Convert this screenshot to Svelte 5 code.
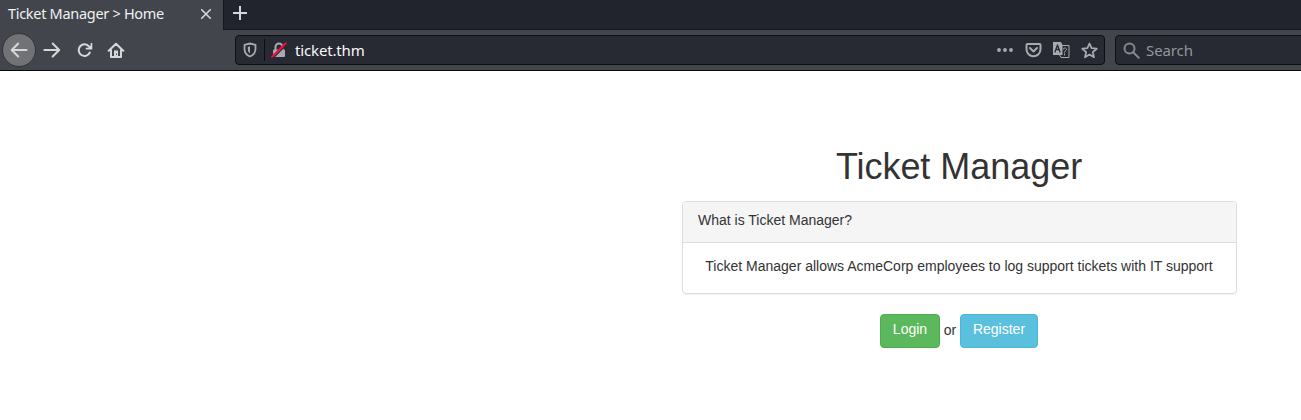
<script>
  const title = 'Ticket Manager';
</script>

<div class="window">
  <header class="tabs">
    <div class="tab">
      <span class="tab-title">Ticket Manager &gt; Home</span>
      <svg class="close" width="12" height="12" viewBox="0 0 12 12"><path d="M1.700 1.700l8.600 8.600M10.300 1.700l-8.600 8.600" /></svg>
    </div>
    <div class="strip">
      <svg width="16" height="16" viewBox="0 0 16 16"><path d="M8 1v14M1 8h14" /></svg>
    </div>
  </header>

  <nav class="toolbar">
    <button class="back" aria-label="Back">
      <svg width="18" height="16" viewBox="0 0 18 16"><path d="M16.500 8H2M8.200 1.500L1.700 8l6.500 6.500" /></svg>
    </button>
    <svg class="forward" width="18" height="16" viewBox="0 0 18 16"><path d="M1.300 8H16M9.700 1.500L16.200 8l-6.500 6.500" /></svg>
    <svg class="reload" width="16" height="16" viewBox="0 0 16 16">
      <path d="M12.800 10.500A5.800 5.800 0 1 1 12 4.500" />
      <path class="solid" d="M15.300 1v6.500H8.800V5.800h2.500L13.600 3.500V1z" />
    </svg>
    <svg class="home" width="18" height="17" viewBox="0 0 18 17">
      <path d="M1.700 8.700L9 1.700l7.300 7M4 8v7h10V8" />
      <path class="solid" fill-rule="evenodd" d="M7 8.500h4V16H7zM9 11.500v1.500h1v-1.500z" />
    </svg>

    <div class="address">
      <svg class="shield" width="14" height="16" viewBox="0 0 14 16">
        <path d="M7 1.500L12.500 2.800V7c0 3.700-2.200 6.200-5.500 7.500C3.700 13.200 1.500 10.700 1.500 7V2.800z" />
        <path class="solid" d="M7 4.300L4.800 4.900V7c0 2.100.8 3.500 2.200 4.500z" />
      </svg>
      <span class="divider"></span>
      <svg class="lock" width="16" height="16" viewBox="0 0 16 16">
        <path d="M4.500 8V5a3.500 3.500 0 0 1 7 0v3" />
        <rect x="2" y="7.500" width="12" height="7.500" rx="1" />
        <path class="gap" d="M2.200 16L15.800 2.400" />
        <path class="slash" d="M1.200 14.800L14.800 1.200" />
      </svg>
      <span class="url">ticket.thm</span>
      <svg class="dots" width="16" height="16" viewBox="0 0 16 16"><circle cx="2" cy="8" r="1.900" /><circle cx="8" cy="8" r="1.900" /><circle cx="14" cy="8" r="1.900" /></svg>
      <svg class="pocket" width="17" height="16" viewBox="0 0 17 16">
        <path d="M2.500 2h12q1 0 1 1v4.300a7 7 0 0 1-14 0V3q0-1 1-1z" /><path d="M5 6l3.500 3.500L12 6" />
      </svg>
      <svg class="translate" width="17" height="16" viewBox="0 0 17 16">
        <path class="solid" d="M0 0h8l1.500 3V13H0z" />
        <path class="letter" d="M2 10l2.500-7L7 10M3 7.500h3.200" />
        <path class="frame" d="M9 3.500h7v12H8L6.500 13" />
        <path class="frame" d="M10.200 7q1-1.500 2.400-.8c1.700.9.700 2-.1 2.600-1 .8-1 1-1 1.600M11.500 12v1" />
      </svg>
      <svg class="star" width="17" height="17" viewBox="0 0 17 17"><path d="M8.500 1.500l2.100 4.700 5.100.5-3.900 3.400 1.200 5.100-4.500-2.700L4 15.200l1.200-5.100L1.300 6.700l5.100-.5z" /></svg>
    </div>

    <div class="search">
      <svg width="17" height="17" viewBox="0 0 17 17"><circle cx="6.500" cy="6.500" r="5" /><path d="M10.200 10.200l5.500 5.500" /></svg>
      <span>Search</span>
    </div>
  </nav>

  <main>
    <h1>{title}</h1>
    <section class="panel">
      <div class="heading">What is {title}?</div>
      <div class="content">{title} allows AcmeCorp employees to log support tickets with IT support</div>
    </section>
    <div class="actions">
      <button class="btn login">Login</button>
      <span class="or">or</span>
      <button class="btn register">Register</button>
    </div>
  </main>
</div>

<style>
  :global(body) { margin: 0; background: #fff; overflow: hidden; }
  * { box-sizing: border-box; }
  .window { width: 1301px; height: 420px; overflow: hidden; }
  svg { display: block; flex: none; fill: none; stroke: #d6d7d8; stroke-width: 2; stroke-linecap: round; stroke-linejoin: round; }
  svg .solid { fill: #d6d7d8; stroke: none; }
  button { font: inherit; padding: 0; }
  .tabs { display: flex; height: 30px; background: #42454c; font-family: "Noto Sans", sans-serif; }
  .tab { width: 223px; display: flex; align-items: center; padding: 0 11px 2px 8px; justify-content: space-between; }
  .tab-title { color: #f0f1f1; font-size: 14.500px; letter-spacing: -.3px; line-height: 20px; white-space: nowrap; position: relative; top: -1px; }
  .close { stroke-width: 1.600; }
  .strip { flex: 1; background: #22242d; border-left: 1px solid #15171d; border-bottom: 1px solid #15171d; padding: 5px 0 0 8px; }
  .strip svg { stroke-linecap: butt; }
  .toolbar { display: flex; align-items: center; height: 41px; background: #42454c; border-bottom: 1px solid #08090b; padding-left: 2px; font-family: "Noto Sans", sans-serif; }
  .back { flex: none; width: 34px; height: 34px; border: 1px solid #313339; border-radius: 50%; background: #717276; display: flex; align-items: center; justify-content: center; }
  .forward { margin-left: 7px; }
  .reload { margin-left: 16px; }
  .home { margin-left: 14px; }
  .address, .search { flex: none; height: 30px; background: #272933; border: 1px solid #0d0e12; border-radius: 4px; display: flex; align-items: center; }
  .address { width: 870px; margin-left: 110px; padding-left: 7px; }
  .address svg { stroke: #a9aaad; }
  .address .solid { fill: #a9aaad; }
  .address .shield { stroke-width: 1.800; }
  .divider { width: 1px; height: 22px; background: #0d0e12; margin: 0 7px; }
  .lock rect { fill: #a9aaad; stroke: none; }
  .address .lock { margin-left: -1px; }
  .lock .gap { stroke: #272933; stroke-width: 1.300; }
  .lock .slash { stroke: #f50a40; stroke-width: 2; }
  .url { color: #f9f9fa; font-size: 15px; letter-spacing: -.15px; line-height: 20px; margin-left: 8px; margin-right: auto; }
  .address .dots { fill: #a9aaad; stroke: none; margin-right: 12px; }
  .pocket { margin-right: 11px; }
  .translate { margin-right: 11px; }
  .translate .letter { stroke: #272933; stroke-width: 1.300; }
  .translate .frame { stroke-width: 1; }
  .star { margin-right: 6px; stroke-width: 1.800; }
  .search { width: 240px; margin-left: 10px; padding-left: 7px; }
  .search svg { stroke: #87888c; }
  .search span { color: #949599; font-size: 15px; letter-spacing: -.1px; line-height: 20px; margin-left: 6px; }
  main { width: 555px; margin-left: 682px; padding-top: 76px; color: #333; font: 14px/20px "Liberation Sans", Arial, sans-serif; text-align: center; }
  h1 { margin: 0 0 15px; padding-right: 1px; font-size: 36px; line-height: 39px; font-weight: 400; letter-spacing: -.04px; }
  .panel { border: 1px solid #ddd; border-radius: 4px; box-shadow: 0 1px 1px rgba(0, 0, 0, .05); height: 93px; }
  .heading { height: 41px; padding: 8px 15px; text-align: left; background: #f5f5f5; border-bottom: 1px solid #ddd; border-radius: 3px 3px 0 0; }
  .content { padding: 13px 16px 13px 15px; white-space: nowrap; }
  .actions { display: flex; justify-content: center; margin-top: 20px; padding-right: 1px; }
  .or { width: 20px; padding-top: 6px; }
  .btn { height: 34px; padding: 0 0 4px; border-radius: 4px; color: #fff; line-height: 20px; }
  .login { width: 60px; background: #5cb85c; border: 1px solid #4cae4c; }
  .register { width: 78px; background: #5bc0de; border: 1px solid #46b8da; }
</style>
